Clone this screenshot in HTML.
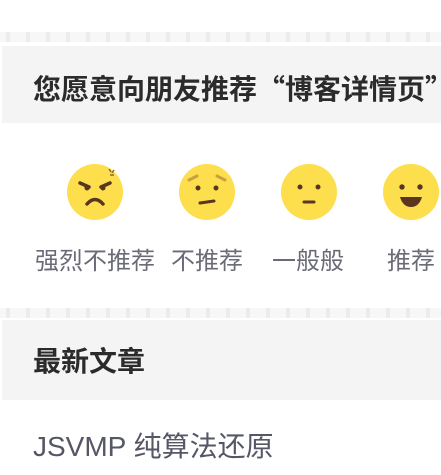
<!DOCTYPE html>
<html><head><meta charset="utf-8"><style>
html,body{margin:0;padding:0;background:#fff;width:441px;height:475px;overflow:hidden;font-family:"Liberation Sans","Noto Sans CJK SC",sans-serif}
.band{position:absolute;left:0;width:441px;height:10px;background:repeating-linear-gradient(90deg,#f7f7f7 0 6px,#ececec 6px 10px,#f7f7f7 10px 20px)}
.hdr{position:absolute;left:2px;width:439px;background:#f4f4f4;font-weight:bold;color:#2b2b2b;font-size:28px;box-sizing:border-box;padding-left:31px;white-space:nowrap;overflow:hidden}
.emo{position:absolute;top:164px}
.lbl{position:absolute;top:246px;font-size:24px;color:#6b6b78;white-space:nowrap;line-height:32px}
</style></head><body>
<div class="band" style="top:32px"></div>
<div class="hdr" style="top:46px;height:77px;line-height:84px;font-family:'Noto Sans CJK SC',sans-serif">您愿意向朋友推荐“博客详情页”</div>
<svg class="emo" style="left:67px" width="56" height="56" viewBox="0 0 56 56"><circle cx="28" cy="28" r="28" fill="#fddf4d"/><path d="M13 19l9 4M43 19l-9 4" stroke="#5a3520" stroke-width="3.5" stroke-linecap="round"/><circle cx="20" cy="24" r="2.5" fill="#5a3520"/><circle cx="36" cy="24" r="2.5" fill="#5a3520"/><path d="M20 40q8-9 16 0" stroke="#5a3520" stroke-width="3.5" fill="none" stroke-linecap="round"/><path d="M42 5l2 3M47 6l-2 3M43 11l4 0" stroke="#8a6a30" stroke-width="1.5"/></svg>
<svg class="emo" style="left:179px" width="56" height="56" viewBox="0 0 56 56"><circle cx="28" cy="28" r="28" fill="#fddf4d"/><path d="M10 16l8-4M46 16l-8-4" stroke="#c9a040" stroke-width="3" stroke-linecap="round"/><circle cx="19" cy="24" r="2.5" fill="#5a3520"/><circle cx="37" cy="24" r="2.5" fill="#5a3520"/><path d="M21 39l14-2" stroke="#5a3520" stroke-width="3" stroke-linecap="round"/></svg>
<svg class="emo" style="left:281px" width="56" height="56" viewBox="0 0 56 56"><circle cx="28" cy="28" r="28" fill="#fddf4d"/><circle cx="19" cy="23" r="2.5" fill="#5a3520"/><circle cx="37" cy="23" r="2.5" fill="#5a3520"/><path d="M23 38h10" stroke="#5a3520" stroke-width="3" stroke-linecap="round"/></svg>
<svg class="emo" style="left:383px" width="56" height="56" viewBox="0 0 56 56"><circle cx="28" cy="28" r="28" fill="#fddf4d"/><circle cx="19" cy="23" r="2.7" fill="#5a3520"/><circle cx="37" cy="23" r="2.7" fill="#5a3520"/><path d="M17 33h22q-3 10-11 10t-11-10z" fill="#5a3520"/></svg>
<div class="lbl" style="left:35px">强烈不推荐</div>
<div class="lbl" style="left:171px">不推荐</div>
<div class="lbl" style="left:272px">一般般</div>
<div class="lbl" style="left:387px">推荐</div>
<div class="band" style="top:308px"></div>
<div class="hdr" style="top:320px;height:80px;line-height:84px">最新文章</div>
<div style="position:absolute;left:33px;top:429px;font-size:28px;color:#555666;line-height:36px;white-space:nowrap">JSVMP 纯算法还原</div>
</body></html>
